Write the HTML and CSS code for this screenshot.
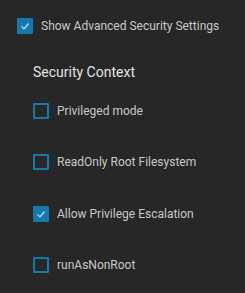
FILE: index.html
```html
<!DOCTYPE html>
<html>
<head>
<meta charset="utf-8">
<link rel="stylesheet" href="styles.css">
</head>
<body>
<div class="panel">
  <label class="row">
    <span class="box checked"><svg viewBox="0 0 16 16" width="16" height="16"><polyline points="4.5,8.3 7,10.8 11.5,5.5" /></svg></span>
    <span class="label">Show Advanced Security Settings</span>
  </label>
  <div class="section">
    <div class="heading">Security Context</div>
    <div class="options">
      <label class="row"><span class="box"></span><span class="label">Privileged mode</span></label>
      <label class="row"><span class="box"></span><span class="label">ReadOnly Root Filesystem</span></label>
      <label class="row"><span class="box checked"><svg viewBox="0 0 16 16" width="16" height="16"><polyline points="4.5,8.3 7,10.8 11.5,5.5" /></svg></span><span class="label">Allow Privilege Escalation</span></label>
      <label class="row"><span class="box"></span><span class="label">runAsNonRoot</span></label>
    </div>
  </div>
</div>
</body>
</html>
```

FILE: styles.css
```css
html, body {
  margin: 0;
  background: #272727;
  font-family: Roboto, "Liberation Sans", sans-serif;
}
.panel {
  padding: 18px 0 0 17px;
  height: 293px;
  box-sizing: border-box;
}
.row {
  display: flex;
  align-items: center;
  gap: 8px;
  height: 16px;
}
.box {
  width: 16px;
  height: 16px;
  box-sizing: border-box;
  border: 2px solid #1679ac;
  border-radius: 1px;
  flex: none;
  position: relative;
}
.box.checked {
  background: #1679ac;
  border: none;
}
.box svg {
  display: block;
}
.box svg polyline {
  fill: none;
  stroke: #cfe0ea;
  stroke-width: 1.2;
}
.label {
  font-size: 12px;
  color: #c9c9c9;
  white-space: nowrap;
}
.section {
  margin-left: 16px;
  margin-top: 30px;
}
.heading {
  font-size: 14px;
  color: #e4e4e4;
  line-height: 16px;
}
.options {
  display: flex;
  flex-direction: column;
  gap: 35.3px;
  margin-top: 23px;
}
```
